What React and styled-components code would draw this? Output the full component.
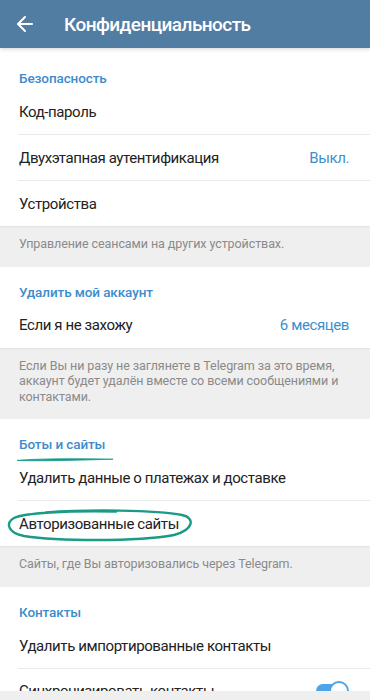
import React from 'react';
import styled, { createGlobalStyle } from 'styled-components';
import { ArrowLeft } from 'lucide-react';

const GlobalStyle = createGlobalStyle`
  html, body {
    margin: 0;
    padding: 0;
    height: 700px;
    overflow: hidden;
    background: #ffffff;
  }
  * { box-sizing: border-box; }
`;

const Page = styled.div`
  width: 370px;
  height: 700px;
  overflow: hidden;
  font-family: Roboto, 'Noto Sans', sans-serif;
  background: #ffffff;
  position: relative;
`;

const Header = styled.header`
  height: 48px;
  background: #527da3;
  display: flex;
  align-items: center;
  padding-left: 13px;
  gap: 27px;
  color: #ffffff;
  box-shadow: 0 1px 4px rgba(0, 0, 0, 0.18);
  position: relative;
  z-index: 1;
`;

const Title = styled.h1`
  margin: 0;
  font-size: 19px;
  font-weight: 500;
  letter-spacing: -0.55px;
`;

const SectionTitle = styled.div`
  position: relative;
  padding: ${p => (p.first ? '20px' : '15px')} 19px 1px;
  line-height: 20px;
  font-size: 13.5px;
  font-weight: 500;
  letter-spacing: -0.1px;
  color: #3d8ccb;
`;

const Row = styled.div`
  position: relative;
  height: ${p => (p.divider ? '46px' : '45px')};
  display: flex;
  align-items: center;
  justify-content: space-between;
  padding: 0 21px 0 19px;
  font-size: 15px;
  letter-spacing: -0.4px;
  color: #222222;
  &::after {
    content: '';
    display: ${p => (p.divider ? 'block' : 'none')};
    position: absolute;
    left: 18px;
    right: 0;
    bottom: 0;
    height: 1px;
    background: #e9e9e9;
  }
`;

const Value = styled.span`
  color: #3d8fcc;
`;

const Info = styled.div`
  background: #efefef;
  color: #8a8a8a;
  font-size: 12.5px;
  letter-spacing: -0.08px;
  line-height: 15.5px;
  padding: 10px 19px 15px;
  box-shadow: inset 0 2px 2px -1px rgba(0, 0, 0, 0.06);
`;

const Switch = styled.div`
  position: relative;
  width: 32px;
  height: 14px;
  border-radius: 7px;
  background: #4ea4e6;
  margin-right: 1px;
  &::after {
    content: '';
    position: absolute;
    right: -1px;
    top: -3px;
    width: 20px;
    height: 20px;
    border-radius: 50%;
    background: #ffffff;
    border: 2px solid #4ea4e6;
    box-sizing: border-box;
  }
`;

const Mark = styled.svg`
  position: absolute;
  left: ${p => p.x}px;
  top: ${p => p.y}px;
  overflow: visible;
  pointer-events: none;
`;

const BottomStrip = styled.div`
  position: absolute;
  left: 0;
  right: 0;
  bottom: 0;
  height: 9px;
  background: #efefef;
`;

export default function App() {
  return (
    <Page>
      <GlobalStyle />
      <Header>
        <ArrowLeft size={24} strokeWidth={2} />
        <Title>Конфиденциальность</Title>
      </Header>

      <SectionTitle first>Безопасность</SectionTitle>
      <Row divider>Код-пароль</Row>
      <Row divider>
        Двухэтапная аутентификация
        <Value>Выкл.</Value>
      </Row>
      <Row>Устройства</Row>
      <Info>Управление сеансами на других устройствах.</Info>

      <SectionTitle>Удалить мой аккаунт</SectionTitle>
      <Row>
        Если я не захожу
        <Value>6 месяцев</Value>
      </Row>
      <Info>
        Если Вы ни разу не заглянете в Telegram за это время, аккаунт будет удалён вместе со всеми сообщениями и
        контактами.
      </Info>

      <SectionTitle>
        Боты и сайты
        <Mark x={17} y={39} width="96" height="4" viewBox="0 0 96 4">
          <path d="M0 2.4 C20 0.6 60 0.4 96 1.2 C62 2.2 22 3.4 0 2.4 Z" fill="#1b9a85" stroke="#1b9a85" strokeWidth="0.8" />
        </Mark>
      </SectionTitle>
      <Row divider>Удалить данные о платежах и доставке</Row>
      <Row>
        Авторизованные сайты
        <Mark x={6} y={8} width="186" height="32" viewBox="0 0 186 32">
          <path
            d="M40 3.5 C80 0.5 150 0.8 176 6 C190 9 187 21 168 26 C130 33 50 32 18 27 C2 24 -1 14 8 9 C18 4 60 1.5 110 2.5"
            fill="none"
            stroke="#1b9a85"
            strokeWidth="2.4"
            strokeLinecap="round"
          />
        </Mark>
      </Row>
      <Info>Сайты, где Вы авторизовались через Telegram.</Info>

      <SectionTitle>Контакты</SectionTitle>
      <Row divider>Удалить импортированные контакты</Row>
      <Row>
        Синхронизировать контакты
        <Switch />
      </Row>
      <BottomStrip />
    </Page>
  );
}
